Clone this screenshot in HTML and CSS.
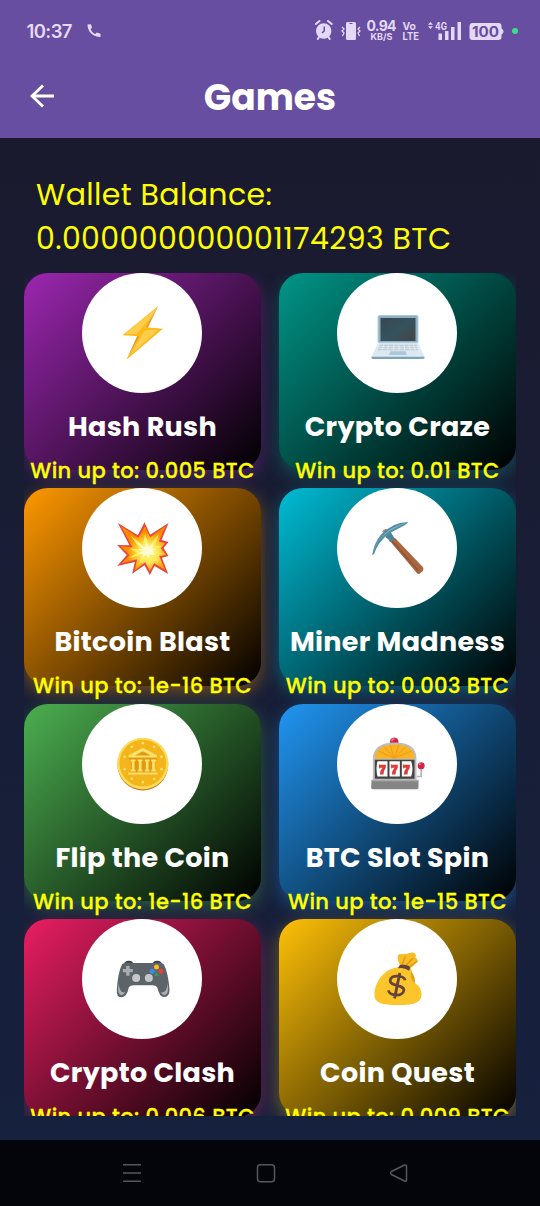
FILE: index.html
```html
<!DOCTYPE html>
<html lang="en">
<head>
<meta charset="utf-8">
<title>Games</title>
<link rel="stylesheet" href="styles.css">
</head>
<body>
<div class="phone">
  <header class="top">
    <div class="status">
      <span class="clock">10:37</span>
      <svg class="call" width="14" height="15" viewBox="0 0 14 15"><path d="M.5 1.500C.6 9 6 14 13.500 14V10.700L9.800 9.500 8.200 11C6 10 4.500 8.300 3.600 6.200L5 4.800 4 1.200Z" fill="#e6daf8"/></svg>
      <svg class="icons" width="210" height="26" viewBox="0 0 210 26" fill="#e3d8f5">
        <circle cx="8.700" cy="14" r="7.700"/><path d="M.8 7 4.500 4M13 4 16.700 7M4 20 2.800 22M13.500 20 14.700 22" stroke="#e3d8f5" stroke-width="2" stroke-linecap="round"/><path d="M9.200 9.500V14L7 16" fill="none" stroke="#674ea1" stroke-width="1.500"/>
        <rect x="31" y="5" width="10" height="18" rx="1.500"/><rect x="34.500" y="6" width="3" height="1" fill="#674ea1"/><path d="M27 10 29 12 27 14 29 16 27.500 19M45 10 43 12 45 14 43 16 44.500 19" fill="none" stroke="#e3d8f5" stroke-width="1.300"/>
        <text class="st" x="51.500" y="14" font-size="14" textLength="30">0.94</text><text class="st" x="55.500" y="22.800" font-size="9" textLength="22">KB/S</text>
        <text class="st" x="87.500" y="12.500" font-size="10.500" textLength="13.500" lengthAdjust="spacingAndGlyphs">Vo</text><text class="st" x="87.500" y="22.800" font-size="10.500" textLength="16.500" lengthAdjust="spacingAndGlyphs">LTE</text>
        <path d="M113 7.800 115.500 5 118 7.800ZM113 9.300 115.500 12 118 9.300Z"/><text class="st" x="120" y="12.500" font-size="10" textLength="12" lengthAdjust="spacingAndGlyphs">4G</text>
        <path d="M123.500 16.500h3.500v6.500h-3.500zM130 14h3.500v9h-3.500zM136 10h3.500v13h-3.500zM142.500 5h3.500v18h-3.500z"/>
        <path d="M157.500 6h26q3 0 3 3v2.500q2 1 2 3t-2 3V20q0 3-3 3h-26q-3 0-3-3V9q0-3 3-3z"/><text class="st pct" x="157" y="19.800" font-size="14.500" textLength="27" lengthAdjust="spacingAndGlyphs">100</text>
        <circle cx="200" cy="14" r="3" fill="#3fdc8c"/>
      </svg>
    </div>
    <div class="bar">
      <svg class="back" width="26" height="26" viewBox="0 0 26 26"><path d="M14 2.500 3 13 14 23.500M3 13H25" fill="none" stroke="#fff" stroke-width="2.800"/></svg>
      <h1>Games</h1>
    </div>
  </header>

  <main>
    <p class="wallet">Wallet Balance:<br>0.000000000001174293 BTC</p>
    <div class="grid">
      <article class="card purple"><div class="disc"><svg viewBox="316.500 138 162 162"><path d="M443 138 336 226 388 229 348 299 457 206 405 202Z" fill="#fdb916"/><path d="M440 142 343 222 379 222 432 159ZM405 211 444 209 362 282 397 220Z" fill="#fece4a"/><path d="M443 138 405 202 412 203ZM348 299 388 229 380 228Z" fill="#e99a16"/></svg></div><h2>Hash Rush</h2><p>Win up to: 0.005 BTC</p></article>

      <article class="card teal"><div class="disc"><svg viewBox="301.500 138 162 162"><defs><linearGradient id="scr" x2="1" y2="1"><stop stop-color="#38474f"/><stop offset=".5" stop-color="#35535e"/><stop offset="1" stop-color="#454545"/></linearGradient></defs><rect x="321" y="165" width="123" height="86" rx="6" fill="#b5d2e2"/><rect x="324" y="167" width="117" height="80" rx="4" fill="#8fb0c3"/><rect x="330" y="174" width="105" height="69" fill="url(#scr)"/><path d="M322 250H443L462 291H303Z" fill="#dce9f0"/><path d="M328 254H438L443 271H322Z" fill="#bccbd4"/><path d="M326 260H441M324 266H443M340 254 334 271M355 254 351 271M370 254 368 271M385 254 386 271M400 254 403 271M415 254 420 271M428 254 435 271" stroke="#edf4f7" stroke-width="2"/><path d="M360 274H405L409 285H355Z" fill="#aac8d9"/><path d="M303 290H462V294Q461 297 456 297H309Q303 297 303 294Z" fill="#7ba4b8"/></svg></div><h2>Crypto Craze</h2><p>Win up to: 0.01 BTC</p></article>

      <article class="card orange"><div class="disc"><svg viewBox="106.500 108 162 162"><defs><radialGradient id="boom" cx=".62" cy=".6" r=".48"><stop stop-color="#fffde0"/><stop offset=".3" stop-color="#fff176"/><stop offset=".65" stop-color="#fdc42c"/><stop offset="1" stop-color="#fb8c00"/></radialGradient></defs><path d="M112 114 172 151 192 112 209 149 264 114 243 165 264 171 249 189 264 213 244 218 263 267 222 243 208 270 192 241 155 266 163 231 110 243 139 210 110 180 147 181Z" fill="#e8453c"/><path d="M122 124 174 158 193 124 209 157 255 123 235 170 255 174 241 190 257 210 236 213 254 255 221 235 208 258 194 232 162 257 170 223 124 235 147 210 120 184 156 187Z" fill="url(#boom)"/><path d="M151 152 187 180 193 149 207 180 235 148 223 182 242 183 227 197 242 207 225 208 233 232 212 218 206 240 195 218 177 235 183 211 145 219 171 203 148 191 178 192Z" fill="#ffee58"/><path d="M169 170 193 187 196 169 207 186 218 172 216 190 225 192 218 199 225 211 209 209 204 221 197 210 185 218 188 206 171 207 184 199 173 192 186 192Z" fill="#fffad0"/></svg></div><h2>Bitcoin Blast</h2><p>Win up to: 1e-16 BTC</p></article>

      <article class="card cyan"><div class="disc"><svg viewBox="106.500 108 162 162"><path d="M163 168 178 158 262 246Q266 250 262 258L252 266Q247 268 244 264Z" fill="#a9673f"/><path d="M167 165 248 257" stroke="#935736" stroke-width="5"/><path d="M140 140Q145 129 156 133L151 147Z" fill="#b9856a"/><path d="M110 210Q116 174 135 151 168 112 218 111 216 118 174 138L154 151Q126 175 116 207Z" fill="#528da4"/><path d="M112 204Q123 166 151 143 174 123 211 114L160 139Q126 163 112 204Z" fill="#82b5c8"/><path d="M151 152 166 142 176 158Q179 165 171 169L163 172Q161 161 151 158Z" fill="#4d8498"/></svg></div><h2>Miner Madness</h2><p>Win up to: 0.003 BTC</p></article>

      <article class="card green"><div class="disc"><svg viewBox="106.500 109.500 162 162"><circle cx="187" cy="194" r="76" fill="#c9791c"/><circle cx="187" cy="189" r="77" fill="#fbdc57"/><circle cx="187" cy="188" r="70" fill="#f3b51b"/><path d="M143 221V215H151V178H145V167L187 145 230 167V178H224V215H231V221Z" fill="#e2990f"/><g fill="#ffe36c"><path d="M144 165 187 142 230 165V171H144ZM163 165H211L187 152Z" fill-rule="evenodd"/><path d="M151 177h14v5h-3v26h3v5h-14v-5h3v-26h-3zM172 177h14v5h-3v26h3v5h-14v-5h3v-26h-3zM193 177h14v5h-3v26h3v5h-14v-5h3v-26h-3zM212 177h14v5h-3v26h3v5h-14v-5h3v-26h-3zM143 216H231V222H143Z"/><circle cx="187" cy="128" r="4"/><circle cx="154" cy="139" r="4"/><circle cx="221" cy="139" r="4"/><circle cx="132" cy="169" r="4"/><circle cx="243" cy="169" r="4"/><circle cx="132" cy="206" r="4"/><circle cx="243" cy="206" r="4"/><circle cx="154" cy="235" r="4"/><circle cx="221" cy="235" r="4"/><circle cx="187" cy="245" r="4"/></g></svg></div><h2>Flip the Coin</h2><p>Win up to: 1e-16 BTC</p></article>

      <article class="card blue"><div class="disc"><svg viewBox="106.500 109.500 162 162"><path d="M163 130Q162 111 176 111T189 130Z" fill="#d32543"/><path d="M169 122Q169 115 177 115" fill="none" stroke="#f48aa0" stroke-width="4"/><path d="M112 177Q112 126 178 126T243 177V240H112Z" fill="#bdbdbd"/><path d="M118 174Q121 132 178 132T237 174Z" fill="#fcb321"/><path d="M176 173 128 151M176 173 145 138M176 173 164 133M176 173 190 133M176 173 211 139M176 173 229 151" stroke="#f09c18" stroke-width="3"/><path d="M118 178H237V235H118Z" fill="#424242"/><path d="M126 182h30v46h-30q-6-23 0-46zM162 182h31v46h-31zM199 182h28q8 23 0 46h-28z" fill="#fff"/><path id="seven" d="M130 191l5 2h16v8q-7 9-7 21h-11q0-11 8-20h-6l-4 3z" fill="#e33a35"/><use href="#seven" x="36"/><use href="#seven" x="72"/><path d="M108 239H249V261Q249 266 244 266H112Q107 266 107 261Z" fill="#858585"/><path d="M107 240H249" stroke="#aaa" stroke-width="5"/><path d="M244 228H257V204" fill="none" stroke="#b5b5b5" stroke-width="5"/><circle cx="257" cy="196" r="10.500" fill="#d32543"/><circle cx="253" cy="191" r="3" fill="#f48aa0"/></svg></div><h2>BTC Slot Spin</h2><p>Win up to: 1e-15 BTC</p></article>

      <article class="card pink"><div class="disc"><svg viewBox="106.500 111 162 162"><path d="M131 148Q132 136 146 137 157 137 158 146ZM217 146Q218 137 229 137 243 136 244 148Z" fill="#3c4347"/><path d="M125 147Q137 140 154 144H221Q239 140 250 148 263 173 267 224 268 246 249 246 237 246 230 217 226 211 216 211H159Q149 211 145 217 139 246 124 247 107 247 109 224 112 173 125 147Z" fill="#5d6469"/><path d="M114 205Q109 240 123 241 131 240 134 231 118 238 114 205ZM262 205Q266 240 252 241 244 240 241 231 257 238 262 205Z" fill="#aaafb2"/><path d="M137 153H147V162H157V172H147V182H137V172H127V162H137Z" fill="#a9adaf"/><circle cx="167" cy="189" r="12" fill="#c5c8ca"/><circle cx="205" cy="189" r="12" fill="#c5c8ca"/><circle cx="228" cy="156" r="7.500" fill="#fbbc18"/><circle cx="215" cy="169" r="7.500" fill="#4087ef"/><circle cx="241" cy="169" r="7.500" fill="#e54335"/><path d="M221 182 228 172 235 182Z" fill="#2fa553"/></svg></div><h2>Crypto Clash</h2><p>Win up to: 0.006 BTC</p></article>

      <article class="card amber"><div class="disc"><svg viewBox="106.500 111 162 162"><path d="M193 151Q180 119 192 118 202 116 214 117 223 111 235 113 244 116 240 127 250 137 246 141L226 159Z" fill="#f7bd22"/><path d="M201 145 209 126M213 150 232 130M222 155 244 139" stroke="#d9951b" stroke-width="4" stroke-linecap="round"/><path d="M188 156C140 164 117 205 117 239C117 263 137 270 190 270C240 270 259 261 258 236C257 218 248 211 238 204L226 158Z" fill="#fcc52c"/><path d="M226 169Q243 187 237 207L226 187Z" fill="#e2a01d"/><path d="M189 156Q192 147 206 149 222 151 224 158L221 167Q205 157 189 160Z" fill="#66433b"/><path d="M209 196C206 181 165 177 164 197C163 215 206 207 205 226C203 246 161 243 159 226M193 174 177 250" fill="none" stroke="#66433b" stroke-width="8.500"/></svg></div><h2>Coin Quest</h2><p>Win up to: 0.009 BTC</p></article>
    </div>
  </main>

  <nav>
    <svg width="540" height="66" viewBox="0 0 540 66" fill="none" stroke="#56575b" stroke-width="1.500"><path d="M123 24.700H141M123 33H141M123 41.300H141"/><rect x="257.500" y="24.700" width="17" height="17" rx="3"/><path d="M406.500 26.500V40Q406.500 42 404.500 41L391.500 34.500Q389.500 33 391.500 31.500L404.500 25Q406.500 24.500 406.500 26.500Z"/></svg>
  </nav>
</div>
</body>
</html>
```
FILE: styles.css
```css
* { box-sizing: border-box; margin: 0; padding: 0; }
body { width: 540px; height: 1206px; overflow: hidden; font-family: Poppins, Inter, "Open Sans", sans-serif; }
svg { display: block; }
.phone { display: flex; flex-direction: column; height: 1206px; background: #04050a; }
.top { height: 137.5px; background: #674ea1; }
.status { display: flex; height: 60px; padding: 0 8px 0 26.5px; align-items: center; }
.clock { width: 60px; padding-top: 1px; font-family: Inter, sans-serif; font-size: 18.5px; font-weight: 600; letter-spacing: -0.6px; color: #e6daf8; }
.icons { margin-left: auto; margin-right: 7px; }
.st { font-family: Inter, sans-serif; font-weight: 700; }
.pct { fill: #674ea1; }
.bar { display: grid; grid-template-columns: 60px 1fr 60px; grid-template-rows: 72px; align-items: center; height: 72px; }
.back { margin-left: 29px; }
h1 { align-self: start; text-align: center; font-size: 36px; font-weight: 700; line-height: 75px; color: #fff; }
main { flex: none; height: 1002.5px; padding: 35.5px 24px 24px; background: linear-gradient(#1a1a2e, #16213e); }
.wallet { height: 99.5px; padding-left: 12px; font-size: 30px; letter-spacing: 0.375px; line-height: 43.5px; color: #ff0; white-space: nowrap; }
.grid { display: grid; grid-template-columns: 1fr 1fr; grid-auto-rows: 197.5px; gap: 18px; height: 843px; overflow: hidden; }
.card { --c: #9c27b0; display: flex; flex-direction: column; align-items: center; border-radius: 24px; background: linear-gradient(135deg, var(--c), #000); box-shadow: 0 6px 18px color-mix(in srgb, var(--c) 40%, transparent); white-space: nowrap; }
.disc { display: flex; flex: none; align-items: center; justify-content: center; width: 120px; height: 120px; margin-right: 1px; border-radius: 50%; background: #fff; }
.disc svg { width: 54px; height: 54px; margin-left: 1px; }
.card h2 { margin-top: 16px; font-size: 27px; letter-spacing: 0.3px; line-height: 36px; color: #fff; }
.card p { margin-top: 10px; font-size: 21px; line-height: 32.5px; font-weight: 500; letter-spacing: 0.4px; color: #ff0; -webkit-text-stroke: 0.3px #ff0; }
.teal { --c: #009688; }
.orange { --c: #ff9800; }
.cyan { --c: #00bcd4; }
.green { --c: #4caf50; }
.blue { --c: #2196f3; }
.pink { --c: #e91e63; }
.amber { --c: #ffc107; }
```
